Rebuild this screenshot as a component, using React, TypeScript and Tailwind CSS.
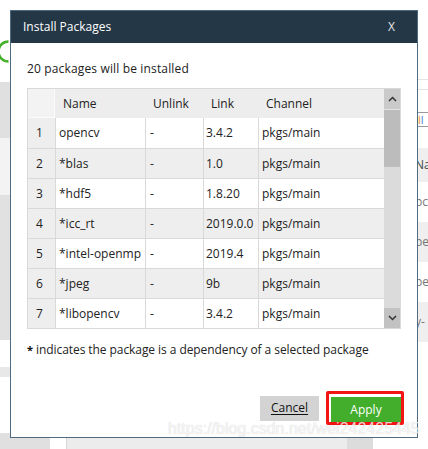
import React from "react";

const rows: string[][] = [
  ["1", "opencv", "-", "3.4.2", "pkgs/main"],
  ["2", "*blas", "-", "1.0", "pkgs/main"],
  ["3", "*hdf5", "-", "1.8.20", "pkgs/main"],
  ["4", "*icc_rt", "-", "2019.0.0", "pkgs/main"],
  ["5", "*intel-openmp", "-", "2019.4", "pkgs/main"],
  ["6", "*jpeg", "-", "9b", "pkgs/main"],
  ["7", "*libopencv", "-", "3.4.2", "pkgs/main"],
];

function Chevron({ up }: { up?: boolean }) {
  return (
    <svg width="9" height="6" viewBox="0 0 9 6">
      <path
        d={up ? "M1 5 L4.5 1.5 L8 5" : "M1 1 L4.5 4.5 L8 1"}
        fill="none"
        stroke="#333"
        strokeWidth="1.5"
      />
    </svg>
  );
}

export default function App() {
  return (
    <div className="relative w-[428px] h-[449px] overflow-hidden bg-white font-['Open_Sans',sans-serif]">
      {/* background page */}
      <div className="flex flex-col w-full h-full">
        <div className="flex flex-row h-[438px]">
          {/* left strip */}
          <div className="flex flex-col w-[10px]">
            <div className="h-[40px] bg-white" />
            <div className="h-[23px] bg-white">
              <svg width="10" height="23" viewBox="0 0 10 23">
                <path d="M8.5 1.5 A 10 10 0 0 0 8.5 21.5" fill="none" stroke="#45b02c" strokeWidth="2.6" />
              </svg>
            </div>
            <div className="h-[19px] bg-white" />
            <div className="h-[56px] bg-[#e0e0e0]" />
            <div className="h-[57px] bg-[#f3f3f3]" />
            <div className="h-[145px] bg-[#e1e1e1]" />
            <div className="h-[27px] bg-white" />
            <div className="h-[10px] bg-[#e8e8e8]" />
            <div className="h-[56px] bg-white" />
            <div className="flex-1 bg-[#e0e0e0]" />
          </div>
          <div className="flex-1" />
          {/* right strip */}
          <div className="flex flex-col w-[10px] overflow-hidden text-[12px] leading-[16px] text-[#444]">
            <div className="h-[80px] border-b border-[#e4e4e4]" />
            <div className="h-[10px] border-b border-[#e4e4e4]" />
            <div className="h-[23px] border-b border-[#9a9a9a]" />
            <div className="h-[14px] border-b border-[#9a9a9a] flex items-center whitespace-nowrap text-[11px]">
              <span className="text-[#e8921e]">l</span>
              <span className="text-[#3b83c8]">l</span>
            </div>
            <div className="h-[21px]" />
            <div className="h-[34px] bg-[#efefef] flex items-center whitespace-nowrap">
              <span className="-ml-[3px]">Na</span>
            </div>
            <div className="h-[40px] flex items-center whitespace-nowrap text-[#777]">
              <span className="-ml-[3px]">pc</span>
            </div>
            <div className="h-[40px] bg-[#efefef] flex items-center whitespace-nowrap text-[#777]">
              <span className="-ml-[3px]">pe</span>
            </div>
            <div className="h-[40px] flex items-center whitespace-nowrap text-[#777]">
              <span className="-ml-[3px]">pe</span>
            </div>
            <div className="h-[40px] bg-[#efefef] flex items-center whitespace-nowrap text-[#777]">
              <span className="-ml-[3px]">y-</span>
            </div>
            <div className="flex-1" />
          </div>
        </div>
        <div className="flex flex-row flex-1">
          <div className="w-[50px] bg-[#e0e0e0]" />
          <div className="w-[16px] bg-white" />
          <div className="w-[281px] bg-[#ececec] border-l border-[#d6d6d6]" />
          <div className="w-[26px] bg-[#dcdcdc]" />
          <div className="flex-1 bg-white" />
        </div>
      </div>

      {/* dialog */}
      <div className="absolute left-[10px] top-[10px] w-[408px] h-[428px] border border-[#4f6b82] bg-white flex flex-col">
        <div className="h-[32px] bg-[#243746] flex items-center justify-between pl-[12px] pr-[22px] text-white text-[12px]">
          <span>Install Packages</span>
          <span className="text-[12px] text-[#e6e6e6]">X</span>
        </div>
        <div className="flex-1 flex flex-col px-[16px] pt-[18px] pb-[15px] text-[#222]">
          <div className="text-[12px] leading-[16px] tracking-[0.15px]">20 packages will be installed</div>

          {/* table */}
          <div className="mt-[11px] border border-[#d9d9d9] flex flex-row text-[12px] text-[#222]">
            <div className="flex flex-col w-[356px]">
              <div className="grid grid-cols-[27px_90px_58px_55px_126px] h-[29px] bg-[#ededed]">
                <div className="bg-[#f3f3f3] border-r border-b border-[#fbfbfb]" />
                <div className="pl-[8px] pt-[1px] flex items-center">Name</div>
                <div className="pl-[8px] pt-[1px] flex items-center">Unlink</div>
                <div className="pl-[8px] pt-[1px] flex items-center">Link</div>
                <div className="pl-[8px] pt-[1px] flex items-center">Channel</div>
              </div>
              {rows.map((r, i) => {
                const even = i % 2 === 1;
                return (
                  <div
                    key={r[0]}
                    className={
                      "grid grid-cols-[27px_90px_58px_55px_126px] h-[30px] " +
                      (i > 0 ? "border-t border-[#d9d9d9] " : "") +
                      (even ? "bg-[#eeeeee]" : "bg-white")
                    }
                  >
                    <div className="bg-[#eeeeee] pl-[8px] flex items-center">{r[0]}</div>
                    <div className="border-l border-[#d9d9d9] pl-[3px] flex items-center whitespace-nowrap overflow-hidden">{r[1]}</div>
                    <div className="border-l border-[#d9d9d9] pl-[4px] flex items-center">{r[2]}</div>
                    <div className="border-l border-[#d9d9d9] pl-[2px] flex items-center whitespace-nowrap overflow-hidden">{r[3]}</div>
                    <div className="border-l border-[#d9d9d9] pl-[3px] flex items-center">{r[4]}</div>
                  </div>
                );
              })}
            </div>
            {/* scrollbar */}
            <div className="w-[16px] flex flex-col bg-[#dbdbdb]">
              <div className="h-[20px] bg-[#cacaca] flex items-center justify-center">
                <Chevron up />
              </div>
              <div className="h-[1px] bg-[#e4e4e4]" />
              <div className="h-[57px] bg-[#bcbcbc]" />
              <div className="flex-1" />
              <div className="h-[20px] bg-[#c2c2c2] flex items-center justify-center">
                <Chevron />
              </div>
            </div>
          </div>

          <div className="mt-[13px] text-[12px] leading-[16px] flex items-center whitespace-nowrap">
            <span className="font-bold text-[11px] text-[#111] w-[9px]">*</span>
            <span className="tracking-[-0.07px]">indicates the package is a dependency of a selected package</span>
          </div>

          <div className="flex-1" />

          <div className="flex flex-row justify-end gap-[12px]">
            <button className="w-[59px] h-[25px] bg-[#d3d3d3] text-[12px] text-[#111] underline underline-offset-2">
              Cancel
            </button>
            <div className="relative">
              <button className="w-[70px] h-[25px] bg-[#42ae2b] text-[12px] text-white">Apply</button>
              <div className="absolute -left-[5px] -top-[5px] -right-[3px] -bottom-[3px] border-[3px] border-[#f31414] rounded-[2px] pointer-events-none" />
            </div>
          </div>
        </div>
      </div>

      {/* watermark */}
      <div className="absolute left-[168px] top-[419px] text-[16px] leading-[20px] font-['Liberation_Sans',sans-serif] text-[rgba(255,255,255,0.8)] [text-shadow:0_0_1px_rgba(0,0,0,0.22)] whitespace-nowrap pointer-events-none">
        https://blog.csdn.net/wei242425445
      </div>
    </div>
  );
}
